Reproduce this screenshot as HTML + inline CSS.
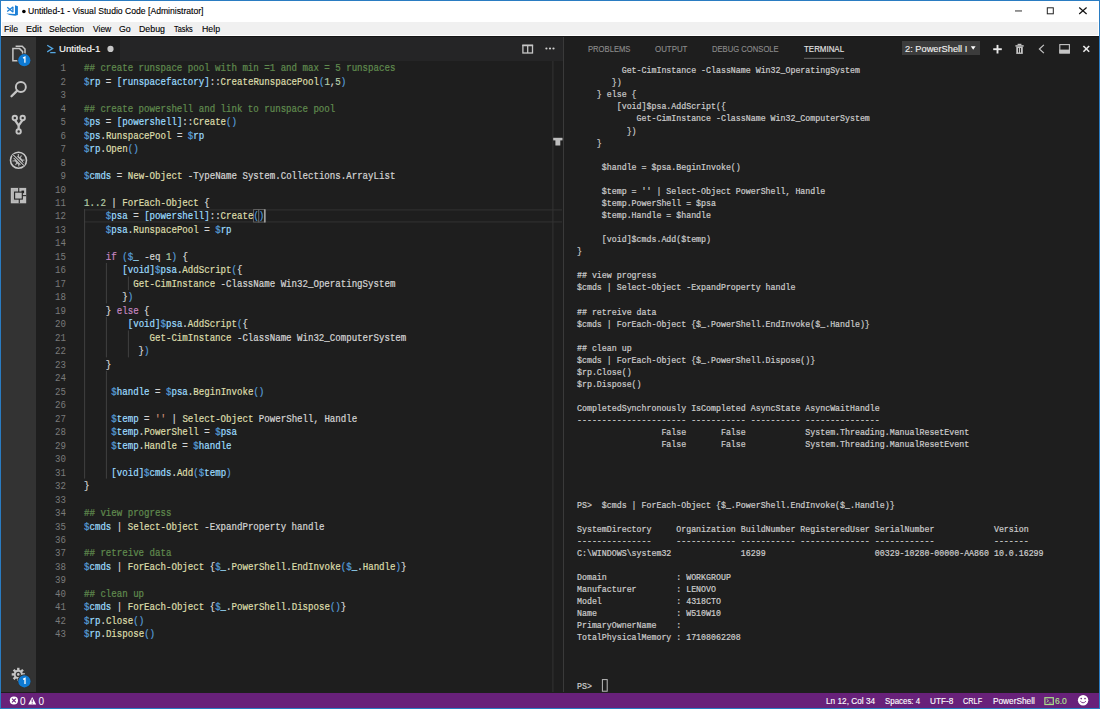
<!DOCTYPE html>
<html><head><meta charset="utf-8">
<style>
*{box-sizing:border-box}
html,body{margin:0;padding:0}
body{width:1100px;height:709px;overflow:hidden;position:relative;background:#1e1e1e;font-family:"Liberation Sans",sans-serif}
.abs{position:absolute}
#frame{position:absolute;left:0;top:0;width:1100px;height:709px;border:1px solid #2a7cc2;z-index:50;pointer-events:none}
#title{position:absolute;left:1px;top:1px;width:1098px;height:21px;background:#fff}
#menu{position:absolute;left:2px;top:22px;width:1096px;height:12.5px;background:#f0f0f0}
#menuwhite{position:absolute;left:1px;top:22px;width:1098px;height:14px;background:#fff}
#topline{position:absolute;left:1px;top:36px;width:1098px;height:1px;background:#151515;z-index:5}
.tt{position:absolute;font-size:10.2px;color:#000;white-space:pre;line-height:12px}
.mi{position:absolute;top:23.5px;font-size:9.2px;color:#000;line-height:11px;white-space:pre}
#act{position:absolute;left:1px;top:36px;width:35px;height:656px;background:#333}
#tabs{position:absolute;left:36.5px;top:36px;width:526px;height:24.8px;background:#252526}
#tab{position:absolute;left:36.5px;top:36px;width:83.5px;height:24.8px;background:#1e1e1e}
#panel{position:absolute;left:562.5px;top:36px;width:536.5px;height:656px;background:#1e1e1e;border-left:1px solid #3a3a3a}
#status{position:absolute;left:1px;top:692.8px;width:1098px;height:15.2px;background:#68217a}
.st{position:absolute;top:694.5px;font-size:9.2px;color:#fff;line-height:11px;white-space:pre}
.el{position:absolute;left:84.1px;height:13.48px;line-height:13.48px;font-family:"Liberation Mono",monospace;font-size:10px;white-space:pre;color:#d4d4d4;transform:scaleX(0.9102);transform-origin:0 0}
.ln{position:absolute;left:30px;width:36px;text-align:right;height:13.48px;line-height:13.48px;font-family:"Liberation Mono",monospace;font-size:10px;color:#7a7a7a;transform:scaleX(0.9102);transform-origin:100% 0}
.tl{position:absolute;left:577.3px;height:12.067px;line-height:12.067px;font-family:"Liberation Mono",monospace;font-size:9.1px;white-space:pre;color:#cccccc;transform:scaleX(0.9095);transform-origin:0 0}
.c{color:#608b4e}.d{color:#569cd6}.v{color:#9cdcfe}.o{color:#d4d4d4}.t{color:#9cdcfe}.f{color:#dcdcaa}.p{color:#569cd6}.n{color:#b5cea8}.k{color:#c586c0}.s{color:#ce9178}
.ui{position:absolute;line-height:20px;white-space:pre;transform-origin:0 0}
.ph{position:absolute;top:42.5px;font-size:9px;color:#8f8f8f;line-height:11px;white-space:pre}
.tl,.el{-webkit-text-stroke:0.22px currentColor}
.ui{-webkit-text-stroke:0.12px currentColor}
</style></head><body>
<div id="title"></div>
<div id="menuwhite"></div>
<div id="menu"></div>
<div id="topline"></div>

<div id="act"></div>
<div id="tabs"></div>
<div id="tab"></div>

<svg width="1100" height="709" viewBox="0 0 1100 709" style="position:absolute;left:0;top:0;pointer-events:none">
<!-- current line highlight line 12 -->
<g stroke="#2e2e2e" stroke-width="1.2" fill="none">
<line x1="84" y1="209.8" x2="562" y2="209.8"/>
<line x1="84" y1="221.9" x2="562" y2="221.9"/>
</g>
<!-- bracket match boxes -->
<g fill="#141414" stroke="#6a6a6a" stroke-width="0.9">
<rect x="253.6" y="209.6" width="5.2" height="12.4"/>
<rect x="258.8" y="209.6" width="5.5" height="12.4"/>
</g>

<!-- indent guides -->
<g stroke="#404040" stroke-width="1">
<line x1="84.6" y1="209.1" x2="84.6" y2="478.6"/>
<line x1="106.4" y1="263" x2="106.4" y2="303.4"/>
<line x1="106.4" y1="317" x2="106.4" y2="357.4"/>
<line x1="106.4" y1="370.9" x2="106.4" y2="478.6"/>
<line x1="128.4" y1="276.5" x2="128.4" y2="290"/>
<line x1="128.4" y1="330.4" x2="128.4" y2="357.4"/>
</g>

</svg>

<div class="el" style="top:62.20px"><span class="c">## create runspace pool with min =1 and max = 5 runspaces</span></div>
<div class="ln" style="top:62.20px">1</div>
<div class="el" style="top:75.68px"><span class="d">$</span><span class="v">rp</span><span class="o"> = </span><span class="t">[runspacefactory]</span><span class="o">::</span><span class="f">CreateRunspacePool</span><span class="p">(</span><span class="n">1</span><span class="o">,</span><span class="n">5</span><span class="p">)</span></div>
<div class="ln" style="top:75.68px">2</div>
<div class="el" style="top:89.16px"></div>
<div class="ln" style="top:89.16px">3</div>
<div class="el" style="top:102.64px"><span class="c">## create powershell and link to runspace pool</span></div>
<div class="ln" style="top:102.64px">4</div>
<div class="el" style="top:116.12px"><span class="d">$</span><span class="v">ps</span><span class="o"> = </span><span class="t">[powershell]</span><span class="o">::</span><span class="f">Create</span><span class="p">()</span></div>
<div class="ln" style="top:116.12px">5</div>
<div class="el" style="top:129.60px"><span class="d">$</span><span class="v">ps</span><span class="o">.</span><span class="f">RunspacePool</span><span class="o"> = </span><span class="d">$</span><span class="v">rp</span></div>
<div class="ln" style="top:129.60px">6</div>
<div class="el" style="top:143.08px"><span class="d">$</span><span class="v">rp</span><span class="o">.</span><span class="f">Open</span><span class="p">()</span></div>
<div class="ln" style="top:143.08px">7</div>
<div class="el" style="top:156.56px"></div>
<div class="ln" style="top:156.56px">8</div>
<div class="el" style="top:170.04px"><span class="d">$</span><span class="v">cmds</span><span class="o"> = </span><span class="f">New-Object</span><span class="o"> -TypeName System.Collections.ArrayList</span></div>
<div class="ln" style="top:170.04px">9</div>
<div class="el" style="top:183.52px"></div>
<div class="ln" style="top:183.52px">10</div>
<div class="el" style="top:197.00px"><span class="n">1..2</span><span class="o"> | </span><span class="f">ForEach-Object</span><span class="o"> {</span></div>
<div class="ln" style="top:197.00px">11</div>
<div class="el" style="top:210.48px"><span class="o">    </span><span class="d">$</span><span class="v">psa</span><span class="o"> = </span><span class="t">[powershell]</span><span class="o">::</span><span class="f">Create</span><span class="p">()</span></div>
<div class="ln" style="top:210.48px">12</div>
<div class="el" style="top:223.96px"><span class="o">    </span><span class="d">$</span><span class="v">psa</span><span class="o">.</span><span class="f">RunspacePool</span><span class="o"> = </span><span class="d">$</span><span class="v">rp</span></div>
<div class="ln" style="top:223.96px">13</div>
<div class="el" style="top:237.44px"></div>
<div class="ln" style="top:237.44px">14</div>
<div class="el" style="top:250.92px"><span class="o">    </span><span class="k">if</span><span class="o"> </span><span class="p">(</span><span class="d">$</span><span class="v">_</span><span class="o"> -eq </span><span class="n">1</span><span class="p">)</span><span class="o"> {</span></div>
<div class="ln" style="top:250.92px">15</div>
<div class="el" style="top:264.40px"><span class="o">       </span><span class="t">[void]</span><span class="d">$</span><span class="v">psa</span><span class="o">.</span><span class="f">AddScript</span><span class="p">(</span><span class="o">{</span></div>
<div class="ln" style="top:264.40px">16</div>
<div class="el" style="top:277.88px"><span class="o">         </span><span class="f">Get-CimInstance</span><span class="o"> -ClassName Win32_OperatingSystem</span></div>
<div class="ln" style="top:277.88px">17</div>
<div class="el" style="top:291.36px"><span class="o">       }</span><span class="p">)</span></div>
<div class="ln" style="top:291.36px">18</div>
<div class="el" style="top:304.84px"><span class="o">    } </span><span class="k">else</span><span class="o"> {</span></div>
<div class="ln" style="top:304.84px">19</div>
<div class="el" style="top:318.32px"><span class="o">        </span><span class="t">[void]</span><span class="d">$</span><span class="v">psa</span><span class="o">.</span><span class="f">AddScript</span><span class="p">(</span><span class="o">{</span></div>
<div class="ln" style="top:318.32px">20</div>
<div class="el" style="top:331.80px"><span class="o">            </span><span class="f">Get-CimInstance</span><span class="o"> -ClassName Win32_ComputerSystem</span></div>
<div class="ln" style="top:331.80px">21</div>
<div class="el" style="top:345.28px"><span class="o">          }</span><span class="p">)</span></div>
<div class="ln" style="top:345.28px">22</div>
<div class="el" style="top:358.76px"><span class="o">    }</span></div>
<div class="ln" style="top:358.76px">23</div>
<div class="el" style="top:372.24px"></div>
<div class="ln" style="top:372.24px">24</div>
<div class="el" style="top:385.72px"><span class="o">     </span><span class="d">$</span><span class="v">handle</span><span class="o"> = </span><span class="d">$</span><span class="v">psa</span><span class="o">.</span><span class="f">BeginInvoke</span><span class="p">()</span></div>
<div class="ln" style="top:385.72px">25</div>
<div class="el" style="top:399.20px"></div>
<div class="ln" style="top:399.20px">26</div>
<div class="el" style="top:412.68px"><span class="o">     </span><span class="d">$</span><span class="v">temp</span><span class="o"> = </span><span class="s">&#x27;&#x27;</span><span class="o"> | </span><span class="f">Select-Object</span><span class="o"> PowerShell, Handle</span></div>
<div class="ln" style="top:412.68px">27</div>
<div class="el" style="top:426.16px"><span class="o">     </span><span class="d">$</span><span class="v">temp</span><span class="o">.</span><span class="f">PowerShell</span><span class="o"> = </span><span class="d">$</span><span class="v">psa</span></div>
<div class="ln" style="top:426.16px">28</div>
<div class="el" style="top:439.64px"><span class="o">     </span><span class="d">$</span><span class="v">temp</span><span class="o">.</span><span class="f">Handle</span><span class="o"> = </span><span class="d">$</span><span class="v">handle</span></div>
<div class="ln" style="top:439.64px">29</div>
<div class="el" style="top:453.12px"></div>
<div class="ln" style="top:453.12px">30</div>
<div class="el" style="top:466.60px"><span class="o">     </span><span class="t">[void]</span><span class="d">$</span><span class="v">cmds</span><span class="o">.</span><span class="f">Add</span><span class="p">(</span><span class="d">$</span><span class="v">temp</span><span class="p">)</span></div>
<div class="ln" style="top:466.60px">31</div>
<div class="el" style="top:480.08px"><span class="o">}</span></div>
<div class="ln" style="top:480.08px">32</div>
<div class="el" style="top:493.56px"></div>
<div class="ln" style="top:493.56px">33</div>
<div class="el" style="top:507.04px"><span class="c">## view progress</span></div>
<div class="ln" style="top:507.04px">34</div>
<div class="el" style="top:520.52px"><span class="d">$</span><span class="v">cmds</span><span class="o"> | </span><span class="f">Select-Object</span><span class="o"> -ExpandProperty handle</span></div>
<div class="ln" style="top:520.52px">35</div>
<div class="el" style="top:534.00px"></div>
<div class="ln" style="top:534.00px">36</div>
<div class="el" style="top:547.48px"><span class="c">## retreive data</span></div>
<div class="ln" style="top:547.48px">37</div>
<div class="el" style="top:560.96px"><span class="d">$</span><span class="v">cmds</span><span class="o"> | </span><span class="f">ForEach-Object</span><span class="o"> {</span><span class="d">$</span><span class="v">_</span><span class="o">.</span><span class="f">PowerShell</span><span class="o">.</span><span class="f">EndInvoke</span><span class="p">(</span><span class="d">$</span><span class="v">_</span><span class="o">.</span><span class="f">Handle</span><span class="p">)</span><span class="o">}</span></div>
<div class="ln" style="top:560.96px">38</div>
<div class="el" style="top:574.44px"></div>
<div class="ln" style="top:574.44px">39</div>
<div class="el" style="top:587.92px"><span class="c">## clean up</span></div>
<div class="ln" style="top:587.92px">40</div>
<div class="el" style="top:601.40px"><span class="d">$</span><span class="v">cmds</span><span class="o"> | </span><span class="f">ForEach-Object</span><span class="o"> {</span><span class="d">$</span><span class="v">_</span><span class="o">.</span><span class="f">PowerShell</span><span class="o">.</span><span class="f">Dispose</span><span class="p">()</span><span class="o">}</span></div>
<div class="ln" style="top:601.40px">41</div>
<div class="el" style="top:614.88px"><span class="d">$</span><span class="v">rp</span><span class="o">.</span><span class="f">Close</span><span class="p">()</span></div>
<div class="ln" style="top:614.88px">42</div>
<div class="el" style="top:628.36px"><span class="d">$</span><span class="v">rp</span><span class="o">.</span><span class="f">Dispose</span><span class="p">()</span></div>
<div class="ln" style="top:628.36px">43</div>

<div id="panel"></div>
<div class="abs" style="left:804px;top:58px;width:39.5px;height:1px;background:#6a6a6a"></div>
<div class="abs" style="left:902px;top:41.2px;width:78px;height:14px;background:#3c3c3c"></div>

<div class="tl" style="top:65.20px">         Get-CimInstance -ClassName Win32_OperatingSystem</div>
<div class="tl" style="top:77.27px">       })</div>
<div class="tl" style="top:89.33px">    } else {</div>
<div class="tl" style="top:101.40px">        [void]$psa.AddScript({</div>
<div class="tl" style="top:113.47px">            Get-CimInstance -ClassName Win32_ComputerSystem</div>
<div class="tl" style="top:125.53px">          })</div>
<div class="tl" style="top:137.60px">    }</div>
<div class="tl" style="top:161.74px">     $handle = $psa.BeginInvoke()</div>
<div class="tl" style="top:185.87px">     $temp = &#x27;&#x27; | Select-Object PowerShell, Handle</div>
<div class="tl" style="top:197.94px">     $temp.PowerShell = $psa</div>
<div class="tl" style="top:210.00px">     $temp.Handle = $handle</div>
<div class="tl" style="top:234.14px">     [void]$cmds.Add($temp)</div>
<div class="tl" style="top:246.20px">}</div>
<div class="tl" style="top:270.34px">## view progress</div>
<div class="tl" style="top:282.41px">$cmds | Select-Object -ExpandProperty handle</div>
<div class="tl" style="top:306.54px">## retreive data</div>
<div class="tl" style="top:318.61px">$cmds | ForEach-Object {$_.PowerShell.EndInvoke($_.Handle)}</div>
<div class="tl" style="top:342.74px">## clean up</div>
<div class="tl" style="top:354.81px">$cmds | ForEach-Object {$_.PowerShell.Dispose()}</div>
<div class="tl" style="top:366.88px">$rp.Close()</div>
<div class="tl" style="top:378.94px">$rp.Dispose()</div>
<div class="tl" style="top:403.08px">CompletedSynchronously IsCompleted AsyncState AsyncWaitHandle</div>
<div class="tl" style="top:415.14px">---------------------- ----------- ---------- ---------------</div>
<div class="tl" style="top:427.21px">                 False       False            System.Threading.ManualResetEvent</div>
<div class="tl" style="top:439.28px">                 False       False            System.Threading.ManualResetEvent</div>
<div class="tl" style="top:499.61px">PS&gt;  $cmds | ForEach-Object {$_.PowerShell.EndInvoke($_.Handle)}</div>
<div class="tl" style="top:523.75px">SystemDirectory     Organization BuildNumber RegisteredUser SerialNumber            Version</div>
<div class="tl" style="top:535.81px">---------------     ------------ ----------- -------------- ------------            -------</div>
<div class="tl" style="top:547.88px">C:\WINDOWS\system32              16299                      00329-10280-00000-AA860 10.0.16299</div>
<div class="tl" style="top:572.01px">Domain              : WORKGROUP</div>
<div class="tl" style="top:584.08px">Manufacturer        : LENOVO</div>
<div class="tl" style="top:596.15px">Model               : 4318CTO</div>
<div class="tl" style="top:608.22px">Name                : W510W10</div>
<div class="tl" style="top:620.28px">PrimaryOwnerName    :</div>
<div class="tl" style="top:632.35px">TotalPhysicalMemory : 17108062208</div>
<div class="tl" style="top:680.62px">PS&gt; </div>

<div id="status"></div>

<div class="ui" style="left:27.83px;top:1.0px;font-size:8.4px;color:#000;transform:scaleX(1.0283)">Untitled-1 - Visual Studio Code [Administrator]</div>
<div class="ui" style="left:4.19px;top:18.8px;font-size:8.6px;color:#000;transform:scaleX(1.0157)">File</div>
<div class="ui" style="left:25.51px;top:18.8px;font-size:8.6px;color:#000;transform:scaleX(1.0571)">Edit</div>
<div class="ui" style="left:49.4px;top:18.8px;font-size:8.6px;color:#000;transform:scaleX(0.9927)">Selection</div>
<div class="ui" style="left:92.65px;top:18.8px;font-size:8.6px;color:#000;transform:scaleX(0.9863)">View</div>
<div class="ui" style="left:119.39px;top:18.8px;font-size:8.6px;color:#000;transform:scaleX(1.0233)">Go</div>
<div class="ui" style="left:139.13px;top:18.8px;font-size:8.6px;color:#000;transform:scaleX(1.025)">Debug</div>
<div class="ui" style="left:174.09px;top:18.8px;font-size:8.6px;color:#000;transform:scaleX(0.8558)">Tasks</div>
<div class="ui" style="left:201.74px;top:18.8px;font-size:8.6px;color:#000;transform:scaleX(1.0182)">Help</div>
<div class="ui" style="left:58.78px;top:39.2px;font-size:8.9px;color:#fff;transform:scaleX(1.0884)">Untitled-1</div>
<div class="ui" style="left:588.12px;top:38.7px;font-size:8.4px;color:#8c8c8c;transform:scaleX(0.9121)">PROBLEMS</div>
<div class="ui" style="left:655.13px;top:38.7px;font-size:8.4px;color:#8c8c8c;transform:scaleX(0.9422)">OUTPUT</div>
<div class="ui" style="left:712.12px;top:38.7px;font-size:8.4px;color:#8c8c8c;transform:scaleX(0.9125)">DEBUG CONSOLE</div>
<div class="ui" style="left:803.66px;top:38.7px;font-size:8.4px;color:#e7e7e7;transform:scaleX(0.9461)">TERMINAL</div>
<div class="ui" style="left:905.26px;top:39.0px;font-size:8.6px;color:#f0f0f0;transform:scaleX(1.0779)">2: PowerShell I</div>
<div class="ui" style="left:825.66px;top:690.9px;font-size:8.4px;color:#fff;transform:scaleX(0.9857)">Ln 12, Col 34</div>
<div class="ui" style="left:885.03px;top:690.9px;font-size:8.4px;color:#fff;transform:scaleX(0.9425)">Spaces: 4</div>
<div class="ui" style="left:929.96px;top:690.9px;font-size:8.4px;color:#fff;transform:scaleX(0.9802)">UTF-8</div>
<div class="ui" style="left:963.16px;top:690.9px;font-size:8.4px;color:#fff;transform:scaleX(0.8762)">CRLF</div>
<div class="ui" style="left:992.66px;top:690.9px;font-size:8.4px;color:#fff;transform:scaleX(0.9878)">PowerShell</div>
<div class="ui" style="left:1055.19px;top:690.9px;font-size:8.4px;color:#b0ea8c;transform:scaleX(1.014)">6.0</div>
<div class="st" style="left:20.1px;font-size:10px;top:695.9px">0</div>
<div class="st" style="left:38.6px;font-size:10px;top:695.9px">0</div>
<svg id="icons" width="1100" height="709" viewBox="0 0 1100 709" style="position:absolute;left:0;top:0;z-index:10;pointer-events:none">
<!-- VS Code logo -->
<g fill="#1b7fd6">
<polygon points="15.0,5.2 17.9,6.3 17.9,15.0 15.0,15.7"/>
<polygon points="6.3,13.4 15.2,14.0 15.2,15.7 9.5,15.0"/>
</g>
<g stroke="#1b7fd6" stroke-width="1.3" fill="none">
<line x1="7.2" y1="7.2" x2="12.9" y2="11.9"/>
<line x1="7.2" y1="11.4" x2="12.9" y2="7.0"/>
<line x1="12.9" y1="6.8" x2="12.9" y2="12.3"/>
</g>
<!-- title bullet -->
<circle cx="23.9" cy="11.5" r="1.8" fill="#000"/>
<!-- window controls -->
<rect x="1015" y="10.4" width="7" height="1.1" fill="#444"/>
<rect x="1047.3" y="7.8" width="6" height="6" fill="none" stroke="#222" stroke-width="1"/>
<g stroke="#111" stroke-width="1.2"><line x1="1079.2" y1="7.5" x2="1086.6" y2="14.0"/><line x1="1086.6" y1="7.5" x2="1079.2" y2="14.0"/></g>

<!-- activity bar icons -->
<g fill="none" stroke="#c5c5c5" stroke-width="1.5" stroke-linejoin="miter">
<!-- explorer back doc -->
<path d="M15.6,46.2 H22.2 L25.0,49.0 V54.5"/>
<!-- explorer front doc -->
<path d="M12.9,48.6 H19.6 L22.6,51.6 V60.8 H12.9 Z"/>
</g>
<circle cx="24.3" cy="60.2" r="7.0" fill="#333"/>
<circle cx="24.3" cy="60.2" r="6.1" fill="#0e7ad3"/>
<path d="M23.0,58.2 L24.9,57.2 V62.8" fill="none" stroke="#fff" stroke-width="1.3"/>
<!-- search -->
<g fill="none" stroke="#c5c5c5">
<circle cx="20.85" cy="87" r="5.0" stroke-width="1.9"/>
<line x1="17.2" y1="90.6" x2="11.5" y2="96.3" stroke-width="2.3" stroke-linecap="round"/>
</g>
<!-- git -->
<g fill="none" stroke="#c5c5c5" stroke-width="1.9">
<circle cx="14.8" cy="118" r="2.2"/>
<circle cx="22.7" cy="118" r="2.2"/>
<circle cx="18.65" cy="131.4" r="2.2"/>
</g>
<path d="M15.0,120.2 L18.65,125.6 L22.5,120.2 M18.65,125.3 V129.3" fill="none" stroke="#c5c5c5" stroke-width="2.3"/>
<!-- debug -->
<g>
<circle cx="18.5" cy="160.2" r="8.0" fill="none" stroke="#c8c8c8" stroke-width="1.6"/>
<ellipse cx="18.8" cy="160.6" rx="3.4" ry="4.6" fill="#c0c0c0" transform="rotate(-45 18.8 160.6)"/>
<g stroke="#b8b8b8" stroke-width="1.1"><line x1="13.5" y1="158" x2="23.5" y2="163"/><line x1="15.5" y1="165" x2="21.5" y2="155.5"/><line x1="18.3" y1="154" x2="18.8" y2="166.5"/><line x1="12.5" y1="161" x2="24.5" y2="160"/></g>
<line x1="13.0" y1="154.7" x2="24.0" y2="165.7" stroke="#1e1e1e" stroke-width="2.6"/>
<line x1="13.0" y1="154.7" x2="24.0" y2="165.7" stroke="#c8c8c8" stroke-width="1.1"/>
</g>
<!-- extensions -->
<g>
<rect x="10.8" y="187.9" width="15.4" height="15.4" fill="#bdbdbd"/>
<rect x="12.3" y="189.4" width="4.8" height="12.4" fill="#9a9a9a" opacity="0.35"/>
<rect x="18.1" y="187.9" width="1.2" height="4.5" fill="#333"/>
<rect x="18.7" y="198.9" width="1.2" height="4.4" fill="#333"/>
<rect x="22.1" y="195.0" width="4.1" height="1.2" fill="#333"/>
<rect x="21.5" y="190.6" width="2.6" height="2.6" fill="#222"/>
<rect x="14.6" y="192.1" width="7.7" height="7.0" fill="#bdbdbd" stroke="#222" stroke-width="1.1"/>
</g>
<!-- gear -->
<g transform="translate(18.3 674.4)">
<g fill="#c5c5c5">
<circle r="4.6"/>
<rect x="-1.2" y="-6.6" width="2.4" height="13.2"/>
<rect x="-1.2" y="-6.6" width="2.4" height="13.2" transform="rotate(45)"/>
<rect x="-1.2" y="-6.6" width="2.4" height="13.2" transform="rotate(90)"/>
<rect x="-1.2" y="-6.6" width="2.4" height="13.2" transform="rotate(135)"/>
</g>
<circle r="2.6" fill="#333"/>
<circle r="1.3" fill="#c5c5c5"/>
</g>
<circle cx="24.4" cy="681.3" r="7.0" fill="#333"/>
<circle cx="24.4" cy="681.3" r="6.1" fill="#0e7ad3"/>
<path d="M23.1,679.3 L25.0,678.3 V683.9" fill="none" stroke="#fff" stroke-width="1.3"/>

<!-- tab terminal icon -->
<g fill="none" stroke="#55a7e2" stroke-width="1.3">
<path d="M47.2,45.3 L52.6,48.6 L47.2,51.9"/>
<line x1="50.2" y1="52.6" x2="55.6" y2="52.6"/>
</g>
<circle cx="110.5" cy="48.9" r="3.1" fill="#c5c5c5"/>
<!-- split editor -->
<g fill="none" stroke="#c5c5c5" stroke-width="1.3">
<rect x="522.9" y="45.4" width="9.6" height="7.6"/>
<line x1="527.7" y1="45.4" x2="527.7" y2="53"/>
</g>
<rect x="522.3" y="44.6" width="10.8" height="1.6" fill="#c5c5c5"/>
<g fill="#d0d0d0"><circle cx="546.4" cy="48.5" r="1.1"/><circle cx="550" cy="48.5" r="1.1"/><circle cx="553.5" cy="48.5" r="1.1"/></g>

<!-- editor overview ruler -->
<line x1="552.9" y1="61" x2="552.9" y2="692" stroke="#333" stroke-width="1"/>
<rect x="553.2" y="137.8" width="9.3" height="2.6" fill="#bdbdbd"/>
<rect x="555.4" y="140" width="4.9" height="5.5" fill="#bdbdbd"/>

<!-- cursor -->
<rect x="264.2" y="209.3" width="1.4" height="13.2" fill="#aeafad"/>
<!-- panel header -->
<rect x="804" y="57.8" width="39.5" height="1.2" fill="#5a5a5a"/>
<polygon points="970.8,46.2 975.6,46.2 973.2,49.8" fill="#fff"/>
<g stroke="#e8e8e8" stroke-width="1.9"><line x1="993.2" y1="49.2" x2="1001.8" y2="49.2"/><line x1="997.5" y1="44.9" x2="997.5" y2="53.5"/></g>
<!-- trash -->
<g fill="#c5c5c5">
<rect x="1015.4" y="45.2" width="8.3" height="1.4"/>
<rect x="1017.6" y="43.8" width="3.8" height="1.3"/>
<path d="M1016.3,46.6 H1022.8 V53.9 H1016.3 Z"/>
</g>
<g fill="#1e1e1e"><rect x="1018.0" y="48.0" width="0.9" height="4.5"/><rect x="1020.1" y="48.0" width="0.9" height="4.5"/></g>
<path d="M1043.9,44.9 L1039.4,49 L1043.9,53.1" fill="none" stroke="#c5c5c5" stroke-width="1.2"/>
<rect x="1059.8" y="44.6" width="9.6" height="8.4" fill="none" stroke="#c5c5c5" stroke-width="1.1"/>
<rect x="1059.4" y="49.6" width="10.4" height="3.8" fill="#c5c5c5"/>
<g stroke="#e8e8e8" stroke-width="1.6"><line x1="1083.4" y1="46" x2="1089.2" y2="51.8"/><line x1="1089.2" y1="46" x2="1083.4" y2="51.8"/></g>

<!-- terminal cursor -->
<rect x="602.4" y="679.6" width="4.8" height="11.6" fill="none" stroke="#bbb" stroke-width="1"/>

<!-- status bar icons -->
<circle cx="13.9" cy="700.5" r="4.1" fill="#fff"/>
<g stroke="#68217a" stroke-width="1.1"><line x1="12.0" y1="698.6" x2="15.8" y2="702.4"/><line x1="15.8" y1="698.6" x2="12.0" y2="702.4"/></g>
<polygon points="32.2,696.9 36.2,704.4 28.2,704.4" fill="#fff"/>
<rect x="31.7" y="699.3" width="1" height="2.8" fill="#68217a"/><rect x="31.7" y="702.7" width="1" height="0.9" fill="#68217a"/>
<rect x="1044.9" y="697.7" width="8.4" height="6.8" fill="none" stroke="#a8e08a" stroke-width="1.2"/>
<path d="M1046.6,699.3 L1048.6,700.8 L1046.6,702.3" fill="none" stroke="#a8e08a" stroke-width="0.9"/>
<line x1="1048.8" y1="703" x2="1051.5" y2="703" stroke="#a8e08a" stroke-width="0.8"/>
<circle cx="1083.1" cy="700.2" r="5.2" fill="#fff"/>
<circle cx="1081.2" cy="698.6" r="0.8" fill="#68217a"/><circle cx="1085" cy="698.6" r="0.8" fill="#68217a"/>
<path d="M1080.3,701.2 Q1083.1,704.4 1085.9,701.2" fill="none" stroke="#68217a" stroke-width="0.9"/>
</svg>

<div id="frame"></div>
</body></html>
